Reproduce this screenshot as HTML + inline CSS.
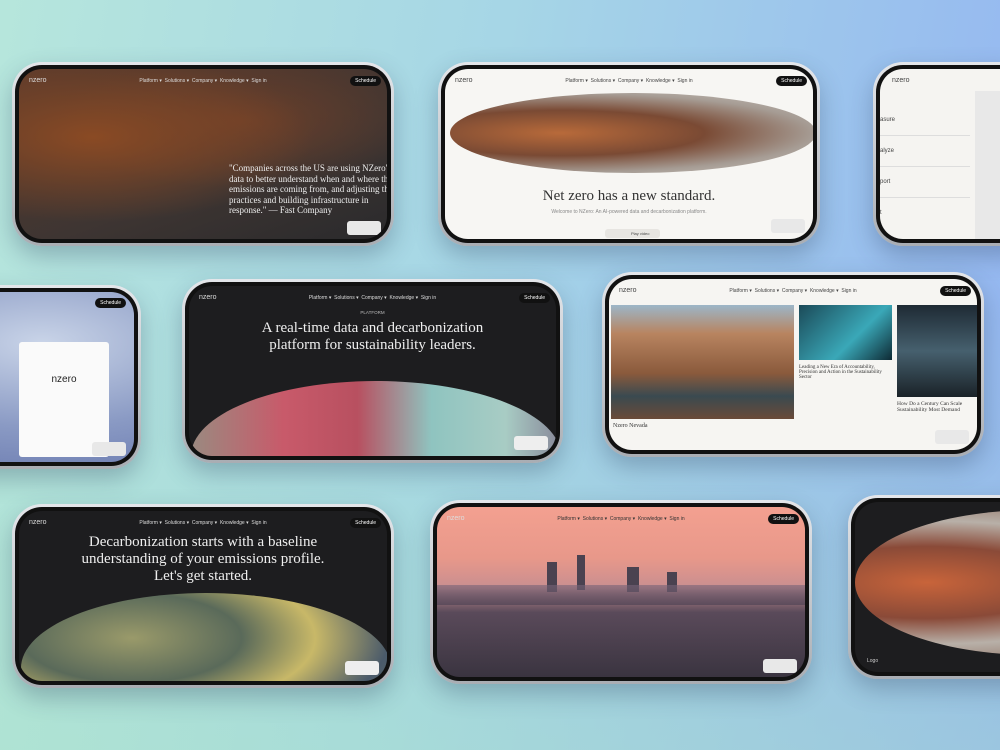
<!DOCTYPE html>
<html><head><meta charset="utf-8"><style>
*{margin:0;padding:0;box-sizing:border-box}
body{width:1000px;height:750px;overflow:hidden;position:relative;font-family:"Liberation Sans",sans-serif;
background:linear-gradient(100deg,#b6e6dc 0%,#a6d6e6 45%,#93b4f2 100%);}
.bg2{position:absolute;inset:0;background:linear-gradient(180deg,rgba(255,255,255,0) 40%,rgba(170,230,190,.35) 100%)}
.ph{position:absolute;border-radius:30px;background:linear-gradient(180deg,#e4e6ea,#a9adb3);padding:3px;box-shadow:0 10px 24px rgba(40,60,90,.3)}
.bz{width:100%;height:100%;border-radius:27px;background:#111;padding:4px}
.sc{position:relative;width:100%;height:100%;border-radius:23px;overflow:hidden}
.nav{position:absolute;top:6px;left:0;right:0;height:14px;font-size:5px;color:#ddd;white-space:nowrap}
.nav .logo{position:absolute;left:10px;top:2px;font-size:7px}
.nav .m{position:absolute;left:0;right:0;text-align:center;top:3px}
.nav .b{position:absolute;right:6px;top:1px;background:#111;color:#fff;border-radius:6px;padding:2px 5px;font-size:5px}
.w .nav{color:#444}
.serif{font-family:"Liberation Serif",serif}
.ck{position:absolute;right:8px;bottom:6px;width:34px;height:14px;background:#e8e8e8;border-radius:3px;font-size:3.5px;padding:2px;color:#444}
</style></head><body><div class="bg2"></div>

<!-- 1 -->
<div class="ph" style="left:12px;top:62px;width:382px;height:184px"><div class="bz"><div class="sc" style="background:radial-gradient(ellipse 60% 50% at 20% 40%,#8a4a24,transparent),radial-gradient(ellipse 50% 40% at 60% 30%,#6b3f2a,transparent),linear-gradient(160deg,#5a3a2c,#3e3532 60%,#2a2a2c)">
<div class="nav"><span class="logo">nzero</span><span class="m">Platform ▾ &nbsp;Solutions ▾ &nbsp;Company ▾ &nbsp;Knowledge ▾ &nbsp;Sign in</span><span class="b">Schedule</span></div>
<div class="serif" style="position:absolute;left:210px;top:94px;width:170px;color:#eee;font-size:9px;line-height:10.5px">"Companies across the US are using NZero's data to better understand when and where the emissions are coming from, and adjusting their practices and building infrastructure in response." — Fast Company</div>
<div class="ck" style="right:6px;bottom:4px"></div></div></div></div>

<!-- 2 -->
<div class="ph w" style="left:438px;top:62px;width:382px;height:184px"><div class="bz"><div class="sc w" style="background:#f7f6f3">
<div class="nav"><span class="logo">nzero</span><span class="m">Platform ▾ &nbsp;Solutions ▾ &nbsp;Company ▾ &nbsp;Knowledge ▾ &nbsp;Sign in</span><span class="b">Schedule</span></div>
<div style="position:absolute;left:5px;top:24px;width:366px;height:80px;border-radius:50%;background:radial-gradient(ellipse at 30% 50%,#b86a3a,#7a4a34 40%,#a69c94 70%,#cfcac4)"></div>
<div class="serif" style="position:absolute;left:0;right:0;top:119px;text-align:center;font-size:15px;color:#333">Net zero has a new standard.</div>
<div style="position:absolute;left:0;right:0;top:140px;text-align:center;font-size:5px;color:#888">Welcome to NZero: An AI-powered data and decarbonization platform.</div>
<div style="position:absolute;left:160px;top:160px;width:55px;height:9px;background:#e7e5e1;border-radius:3px;font-size:4px;color:#444;padding:2px 0 0 26px">Play video</div>
<div class="ck"></div></div></div></div>

<!-- 3 -->
<div class="ph w" style="left:873px;top:62px;width:160px;height:184px"><div class="bz"><div class="sc" style="background:#f5f4f1">
<div class="nav"><span class="logo" style="left:12px">nzero</span></div>
<div style="position:absolute;left:0;top:36px;width:90px;font-size:6px;color:#444;line-height:30px">
<div style="border-bottom:1px solid #ddd">asure</div><div style="border-bottom:1px solid #ddd">alyze</div><div style="border-bottom:1px solid #ddd">port</div><div>t</div></div>
<div style="position:absolute;left:95px;top:22px;right:0;bottom:0;background:#e8e8e8"></div></div></div></div>

<!-- 4 -->
<div class="ph" style="left:-240px;top:285px;width:381px;height:184px"><div class="bz"><div class="sc" style="background:radial-gradient(ellipse at 75% 30%,#c9d4e8,#8a9ac4 50%,#5f6fa8)">
<div style="position:absolute;left:252px;top:50px;width:90px;height:115px;background:#fafafa;border-radius:3px"><div style="text-align:center;margin-top:32px;font-size:10px;color:#222">nzero</div></div>
<span style="position:absolute;right:8px;top:6px;background:#111;color:#fff;font-size:5px;padding:2px 5px;border-radius:6px">Schedule</span>
<div class="ck"></div></div></div></div>

<!-- 5 -->
<div class="ph" style="left:182px;top:279px;width:381px;height:184px"><div class="bz"><div class="sc" style="background:#1d1d1f">
<div class="nav"><span class="logo">nzero</span><span class="m">Platform ▾ &nbsp;Solutions ▾ &nbsp;Company ▾ &nbsp;Knowledge ▾ &nbsp;Sign in</span><span class="b">Schedule</span></div>
<div style="position:absolute;left:0;right:0;top:24px;text-align:center;font-size:4.5px;color:#bbb">PLATFORM</div>
<div class="serif" style="position:absolute;left:0;right:0;top:34px;text-align:center;font-size:15px;line-height:17px;color:#eee">A real-time data and decarbonization<br>platform for sustainability leaders.</div>
<div style="position:absolute;left:2px;top:95px;width:370px;height:150px;border-radius:50%;background:linear-gradient(90deg,#9a8a80,#c85a6a 25%,#b85060 45%,#8fc4c0 65%,#a8ccc4 85%,#889)"></div>
<div class="ck" style="background:#eee"></div></div></div></div>

<!-- 6 -->
<div class="ph w" style="left:602px;top:272px;width:382px;height:185px"><div class="bz"><div class="sc" style="background:#f6f5f2">
<div class="nav"><span class="logo">nzero</span><span class="m">Platform ▾ &nbsp;Solutions ▾ &nbsp;Company ▾ &nbsp;Knowledge ▾ &nbsp;Sign in</span><span class="b">Schedule</span></div>
<div style="position:absolute;left:2px;top:26px;width:183px;height:114px;background:linear-gradient(180deg,#9cb6c8 0%,#b88460 25%,#8a5a3c 60%,#3a4a50 80%,#6a4a38)"></div>
<div style="position:absolute;left:190px;top:26px;width:93px;height:55px;background:linear-gradient(135deg,#1b4a58,#3aa8b8 60%,#0e2a34)"></div>
<div style="position:absolute;left:288px;top:26px;width:90px;height:92px;background:linear-gradient(180deg,#1e2a34,#46606e 50%,#1a2228)"></div>
<div class="serif" style="position:absolute;left:190px;top:86px;width:95px;font-size:5px;color:#333">Leading a New Era of Accountability, Precision and Action in the Sustainability Sector</div>
<div class="serif" style="position:absolute;left:288px;top:122px;width:90px;font-size:5.5px;color:#333">How Do a Century Can Scale Sustainability Most Demand</div>
<div class="serif" style="position:absolute;left:4px;top:144px;font-size:6px;color:#333">Nzero Nevada</div>
<div class="ck"></div></div></div></div>

<!-- 7 -->
<div class="ph" style="left:12px;top:504px;width:382px;height:184px"><div class="bz"><div class="sc" style="background:#1d1d1f">
<div class="nav"><span class="logo">nzero</span><span class="m">Platform ▾ &nbsp;Solutions ▾ &nbsp;Company ▾ &nbsp;Knowledge ▾ &nbsp;Sign in</span><span class="b">Schedule</span></div>
<div class="serif" style="position:absolute;left:0;right:0;top:23px;text-align:center;font-size:15px;line-height:17px;color:#eee">Decarbonization starts with a baseline<br>understanding of your emissions profile.<br>Let's get started.</div>
<div style="position:absolute;left:2px;top:82px;width:370px;height:150px;border-radius:50%;background:radial-gradient(ellipse at 30% 30%,#9a9a6a,#5a6a5a 30%,#c8b868 50%,#4a5a6a 70%,#8a8a5a)"></div>
<div class="ck" style="background:#eee"></div></div></div></div>

<!-- 8 -->
<div class="ph" style="left:430px;top:500px;width:382px;height:184px"><div class="bz"><div class="sc" style="background:linear-gradient(180deg,#f3a090 0%,#e8988a 30%,#c88e90 48%,#5a4a5a 62%,#3a3440 100%)">
<div class="nav"><span class="logo">nzero</span><span class="m" style="color:#333">Platform ▾ &nbsp;Solutions ▾ &nbsp;Company ▾ &nbsp;Knowledge ▾ &nbsp;Sign in</span><span class="b">Schedule</span></div>
<div style="position:absolute;left:110px;top:55px;width:10px;height:30px;background:#4a4250"></div>
<div style="position:absolute;left:140px;top:48px;width:8px;height:35px;background:#4a4250"></div>
<div style="position:absolute;left:190px;top:60px;width:12px;height:25px;background:#4a4250"></div>
<div style="position:absolute;left:230px;top:65px;width:10px;height:20px;background:#4a4250"></div>
<div style="position:absolute;left:0;right:0;top:78px;height:20px;background:linear-gradient(180deg,rgba(120,100,120,.6),rgba(90,74,90,.9))"></div>
<div class="ck" style="bottom:4px"></div></div></div></div>

<!-- 9 -->
<div class="ph" style="left:848px;top:495px;width:382px;height:184px"><div class="bz"><div class="sc" style="background:#1d1d1f">
<div style="position:absolute;left:0;top:8px;width:360px;height:145px;border-radius:50%;background:radial-gradient(ellipse at 20% 50%,#c8643a,#8a4a38 35%,#b8b0a8 60%,#7a5040)"></div>
<div style="position:absolute;left:12px;bottom:8px;font-size:5px;color:#ccc">Logo</div></div></div></div>

</body></html>
